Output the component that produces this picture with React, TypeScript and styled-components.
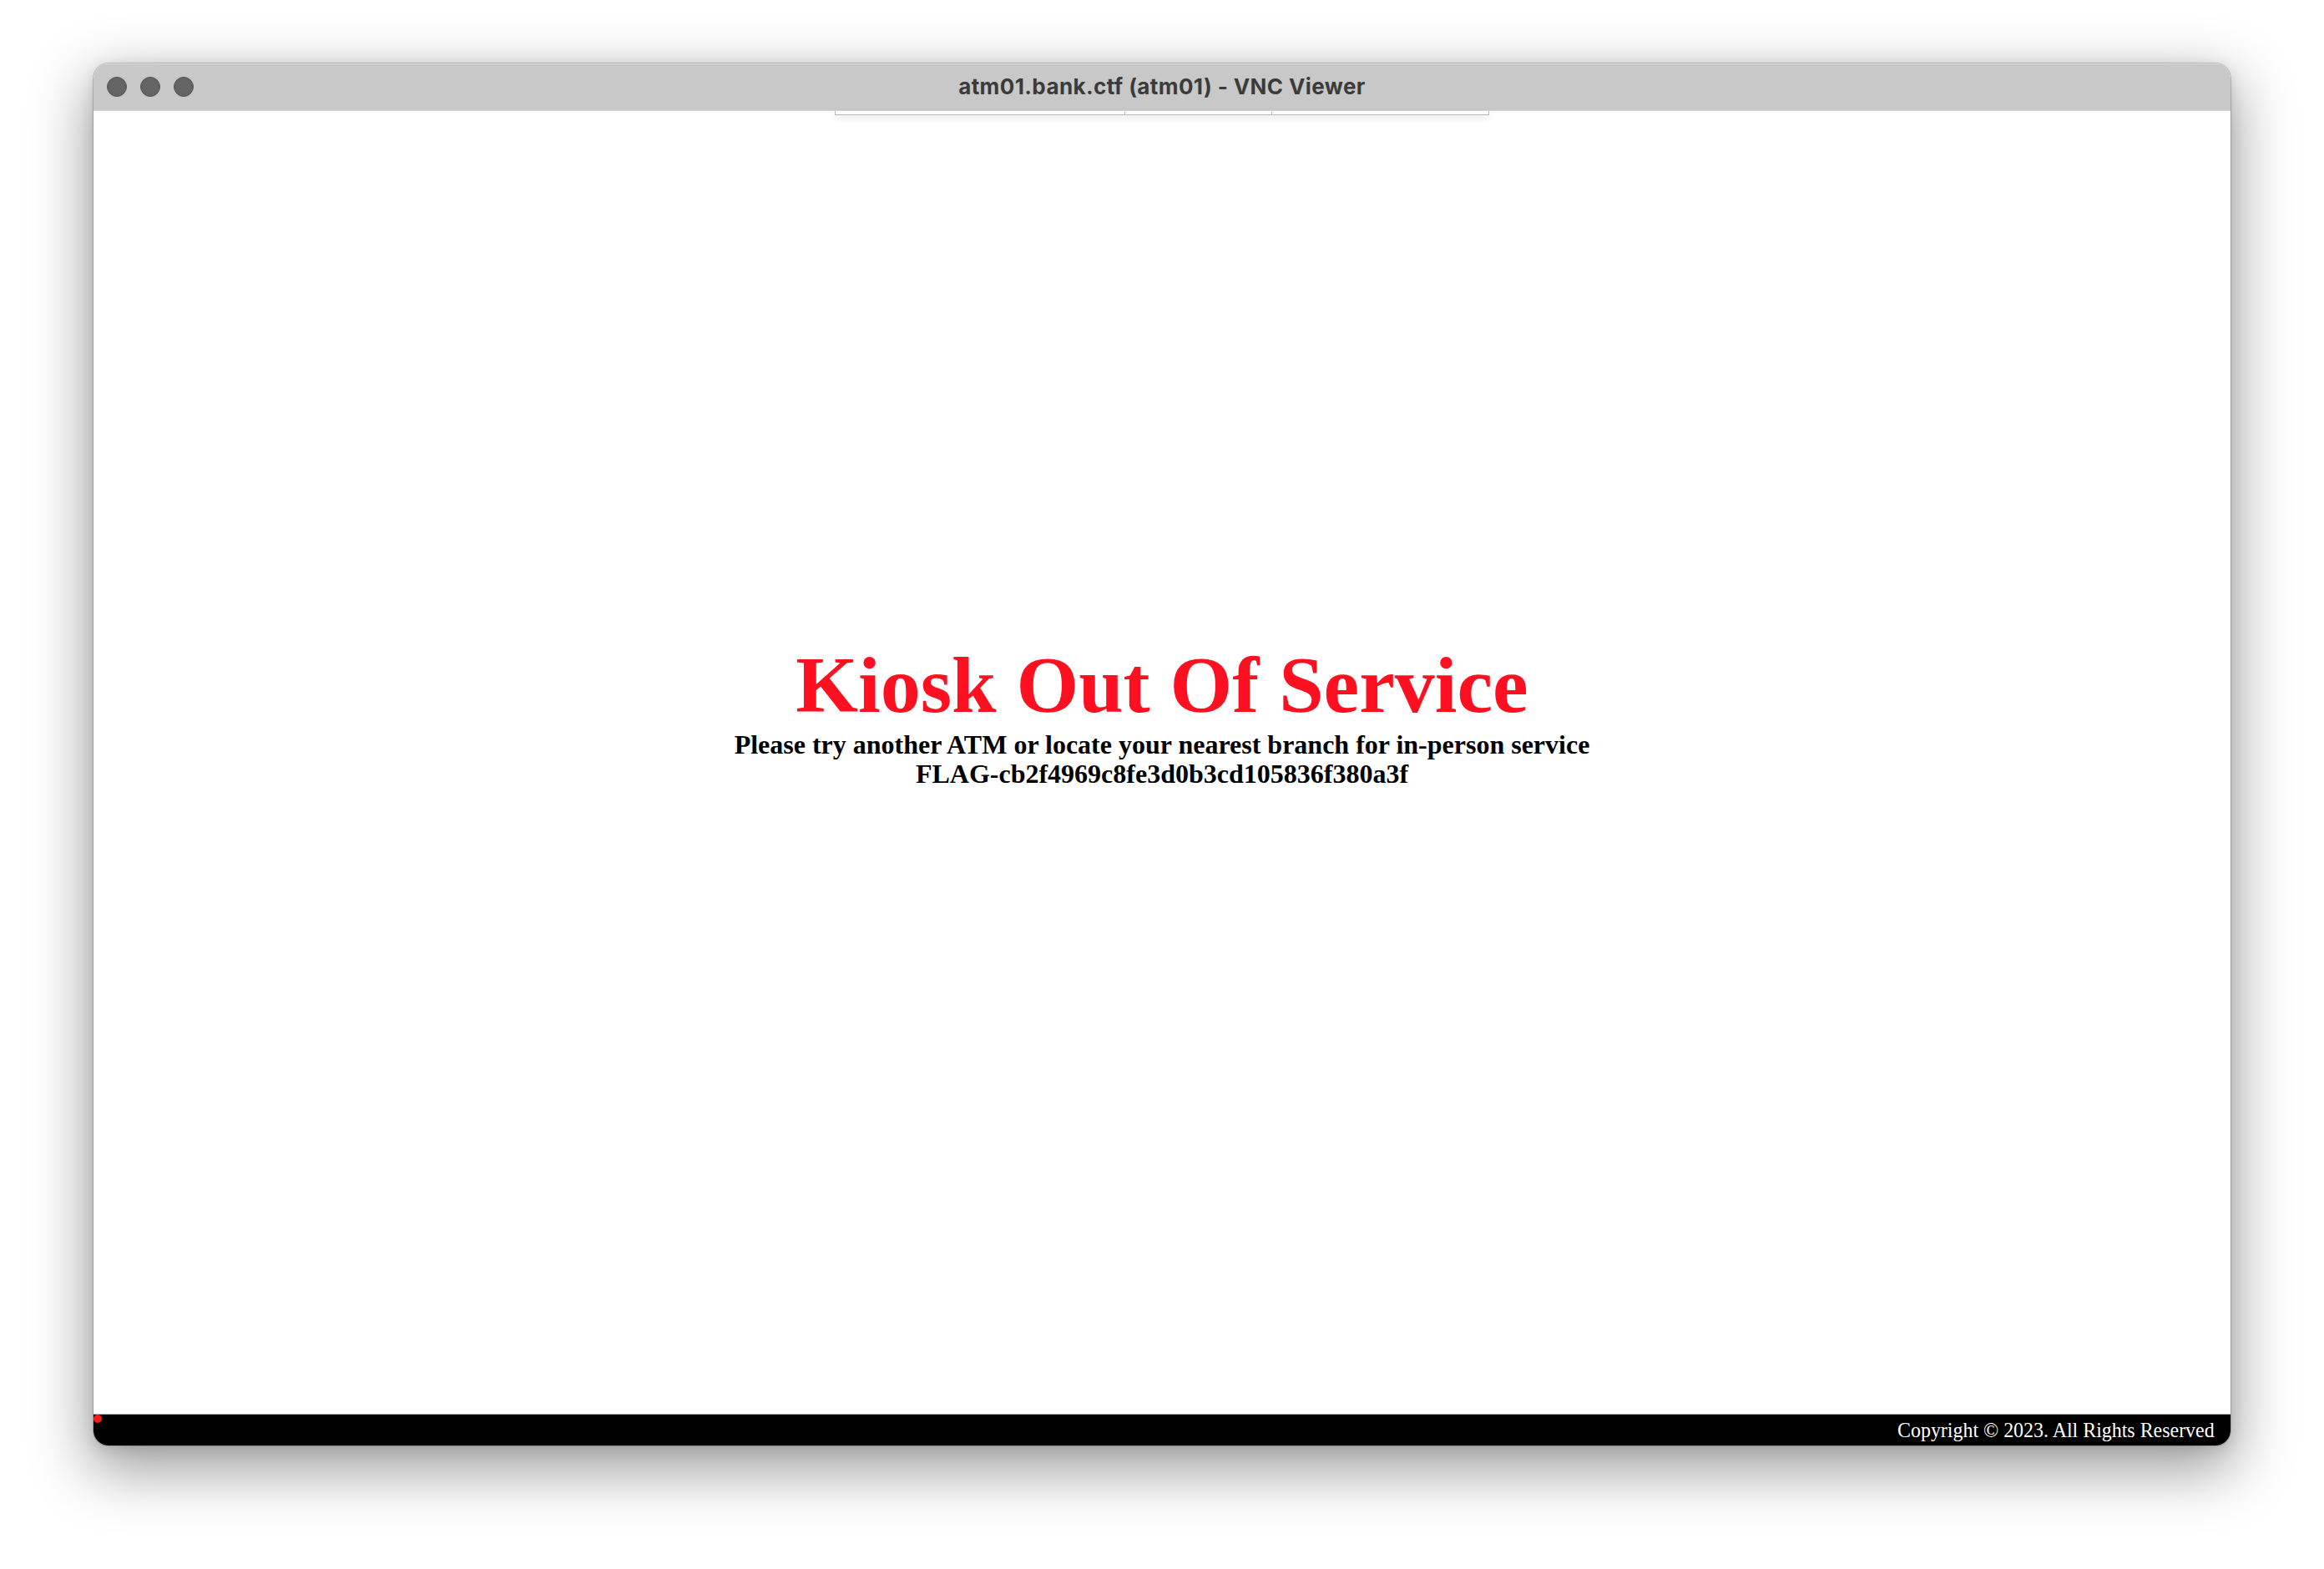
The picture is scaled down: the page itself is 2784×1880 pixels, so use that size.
import React from "react";
import styled, { createGlobalStyle } from "styled-components";

const Global = createGlobalStyle`
  html, body {
    margin: 0;
    padding: 0;
    background: #ffffff;
  }
  body {
    width: 2784px;
    height: 1880px;
    overflow: hidden;
  }
`;

const Desktop = styled.div`
  width: 2784px;
  height: 1880px;
  box-sizing: border-box;
  padding: 76px 0 0 112px;
  background: #ffffff;
`;

const Window = styled.div`
  position: relative;
  width: 2560px;
  height: 1656px;
  display: flex;
  flex-direction: column;
  border-radius: 18px;
  overflow: hidden;
  box-shadow: 0 0 0 1px rgba(0, 0, 0, 0.18), 0 24px 70px 6px rgba(0, 0, 0, 0.38),
    0 4px 18px rgba(0, 0, 0, 0.12);
`;

const TitleBar = styled.div`
  height: 57px;
  flex: none;
  box-sizing: border-box;
  display: grid;
  grid-template-columns: 1fr auto 1fr;
  align-items: center;
  padding: 0 16px 2px;
  background: #c8c8c8;
  border-top: 1px solid #dcdcdc;
  border-bottom: 1px solid #d6d6d6;
`;

const Lights = styled.div`
  display: flex;
  gap: 16px;
  align-items: center;
`;

const Light = styled.span`
  width: 24px;
  height: 24px;
  border-radius: 50%;
  box-sizing: border-box;
  background: #646464;
  border: 1px solid #555555;
`;

const Title = styled.div`
  font-family: Inter, "Noto Sans", sans-serif;
  font-weight: 700;
  font-size: 26px;
  color: #3b3b3b;
  letter-spacing: 0.4px;
  white-space: nowrap;
`;

const Screen = styled.div`
  position: relative;
  flex: 1;
  background: #ffffff;
  display: flex;
  flex-direction: column;
  align-items: center;
  justify-content: center;
  padding-bottom: 110px;
  font-family: "Liberation Serif", "Times New Roman", serif;
  font-weight: 700;
  text-align: center;
`;

const Toolbar = styled.div`
  position: absolute;
  top: 0;
  left: 888px;
  width: 784px;
  height: 5px;
  display: grid;
  grid-template-columns: 347px 176px 1fr;
  box-sizing: border-box;
  background: #ffffff;
  border: 1px solid #b8b8b8;
  border-top: none;
  box-shadow: 0 3px 8px rgba(0, 0, 0, 0.12);
`;

const ToolbarCell = styled.div<{ $divider?: boolean }>`
  border-right: ${(p) => (p.$divider ? "1px solid #c4c4c4" : "none")};
`;

const Heading = styled.h1`
  margin: 0;
  font-size: 96px;
  line-height: 96px;
  font-weight: 700;
  color: #fe1020;
`;

const Line = styled.div<{ $gap?: number }>`
  margin-top: ${(p) => p.$gap ?? 0}px;
  font-size: 32px;
  line-height: 35px;
  color: #000000;
  white-space: nowrap;
`;

const Footer = styled.div`
  position: relative;
  height: 38px;
  flex: none;
  box-sizing: border-box;
  background: #000000;
  border-top: 1px solid #b0b0b0;
  display: flex;
  align-items: center;
  justify-content: flex-end;
  padding-right: 19px;
`;

const Copyright = styled.span`
  font-family: "Liberation Serif", "Times New Roman", serif;
  font-size: 26px;
  color: #ffffff;
  transform: scaleX(0.92);
  transform-origin: right center;
  white-space: nowrap;
`;

const Cursor = styled.span`
  position: absolute;
  left: 0;
  top: 0;
  width: 10px;
  height: 10px;
  border-radius: 50%;
  background: #ff1a1a;
`;

export default function App() {
  return (
    <>
      <Global />
      <Desktop>
        <Window>
          <TitleBar>
            <Lights>
              <Light />
              <Light />
              <Light />
            </Lights>
            <Title>atm01.bank.ctf (atm01) - VNC Viewer</Title>
            <div />
          </TitleBar>
          <Screen>
            <Toolbar>
              <ToolbarCell $divider />
              <ToolbarCell $divider />
              <ToolbarCell />
            </Toolbar>
            <Heading>Kiosk Out Of Service</Heading>
            <Line $gap={6}>Please try another ATM or locate your nearest branch for in-person service</Line>
            <Line>FLAG-cb2f4969c8fe3d0b3cd105836f380a3f</Line>
          </Screen>
          <Footer>
            <Cursor />
            <Copyright>Copyright © 2023. All Rights Reserved</Copyright>
          </Footer>
        </Window>
      </Desktop>
    </>
  );
}
